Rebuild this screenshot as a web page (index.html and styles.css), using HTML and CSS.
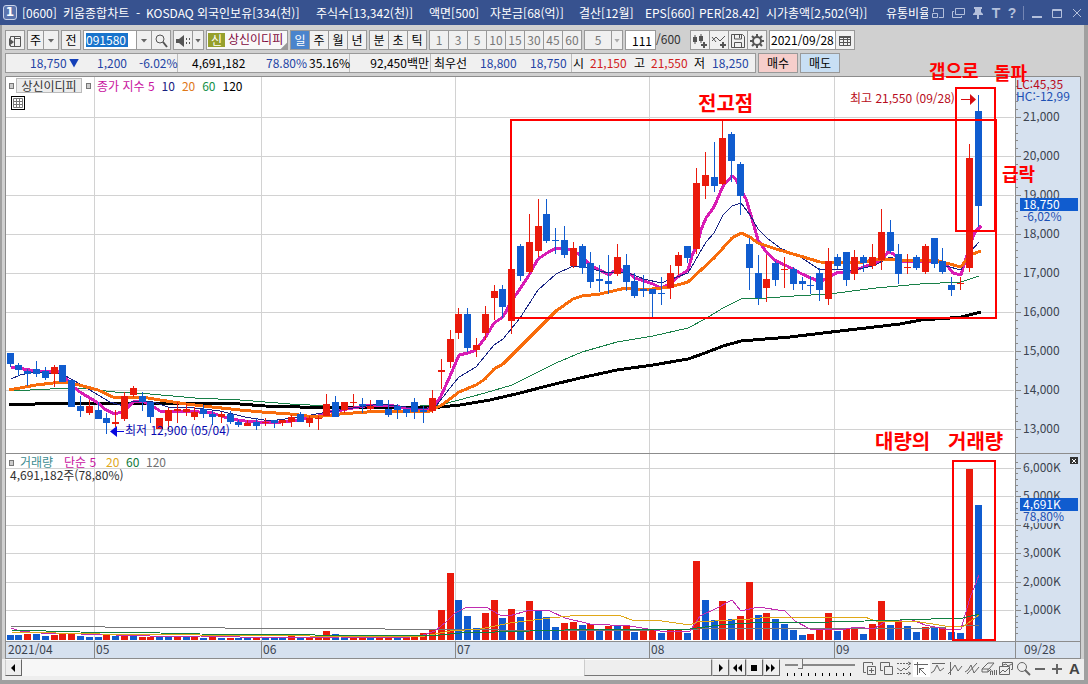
FILE: index.html
```html
<!DOCTYPE html>
<html lang="ko">
<head>
<meta charset="utf-8">
<title>키움종합차트</title>
<link rel="stylesheet" href="styles.css">
</head>
<body>
<header class="titlebar">
  <span class="win-no">1</span>
  <h1 class="title"><span>[0600]</span><span>키움종합차트</span><span>-</span><span>KOSDAQ</span><span>외국인보유[334(천)]</span><span>주식수[13,342(천)]</span><span>액면[500]</span><span>자본금[68(억)]</span><span>결산[12월]</span><span>EPS[660]</span><span>PER[28.42]</span><span>시가총액[2,502(억)]</span><span>유통비율</span></h1>
  <div class="win-tools">
    <button aria-label="창 크기"><svg viewBox="0 0 14 14"><path d="M2.500 6V2.500h10v9H8M1.500 7.500h5v4h-5z"/></svg></button>
    <button aria-label="창 복사"><svg viewBox="0 0 14 14"><path d="M4.500 2.500h9v6h-9zM3 5.500H1.500v6h9V10"/></svg></button>
    <button aria-label="고정"><svg viewBox="0 0 14 14"><path class="solid" d="M3 1h8v2h-1v3l2 2v1H8v4H6V9H2V8l2-2V3H3z"/></svg></button>
    <button class="glyph">T</button>
    <button class="glyph">?</button>
    <i class="sep"></i>
    <button aria-label="최소화"><svg viewBox="0 0 14 14"><path class="thick" d="M2 11h10"/></svg></button>
    <button aria-label="최대화"><svg viewBox="0 0 14 14"><path d="M2.500 3.500h9v8h-9zM2 4.500h10"/></svg></button>
    <button aria-label="닫기"><svg viewBox="0 0 14 14"><path d="M3 3l8 8M11 3l-8 8"/></svg></button>
  </div>
</header>
<main class="window">
  <div class="toolbar">
    <button class="btn" aria-label="패널"><svg viewBox="0 0 16 16"><path d="M3.500 6V3.500h10v10h-10V12M7.500 3v11M7 5.500h7"/><path class="solid" d="M2 5l5 4-5 4z"/></svg></button>
    <div class="group"><button class="btn w17">주</button><button class="btn w15 arrow" aria-label="종목 구분"></button></div>
    <button class="btn">전</button>
    <div class="group"><label class="code"><input type="text" value="091580" aria-label="종목코드"></label><button class="btn w15 arrow" aria-label="종목 목록"></button><button class="btn" aria-label="검색"><svg viewBox="0 0 16 16"><circle cx="7" cy="6" r="4"/><path class="thick" d="M10 9l4 5"/></svg></button></div>
    <div class="group"><button class="btn" aria-label="소리"><svg viewBox="0 0 16 16"><path class="solid" d="M1 6h3l5-4v12l-5-4H1z"/><path class="dots" d="M11.500 5v6M14.500 5v6"/></svg></button><button class="btn w11 arrow" aria-label="소리 설정"></button></div>
    <div class="stock"><b>신</b><span>상신이디피</span></div>
    <div class="group"><button class="btn on">일</button><button class="btn">주</button><button class="btn">월</button><button class="btn">년</button></div>
    <div class="group"><button class="btn">분</button><button class="btn">초</button><button class="btn">틱</button></div>
    <div class="group dim"><button class="btn">1</button><button class="btn">3</button><button class="btn">5</button><button class="btn">10</button><button class="btn">15</button><button class="btn">30</button><button class="btn">45</button><button class="btn">60</button></div>
    <div class="group dim"><button class="btn w28">5</button><button class="btn w11 arrow" aria-label="분 선택"></button></div>
    <label class="count"><input type="text" value="111" aria-label="봉 개수"><span>/600</span></label>
    <div class="group"><button class="btn" aria-label="봉 추가"><svg viewBox="0 0 16 16"><path class="solid" d="M1 4h4v5H1zM7 3h4v5H7z"/><path d="M3 2v9M9 1v9"/><path class="thick" d="M12 9v6M9 12h6"/></svg></button><button class="btn" aria-label="지표 추가"><svg viewBox="0 0 16 16"><path d="M1 8l4-4 4 4 5-5M1 4l4 5"/><path class="thick" d="M12 9v6M9 12h6"/></svg></button><button class="btn" aria-label="저장"><svg viewBox="0 0 16 16"><path d="M1.500 1.500h11l2 2v11h-13zM4.500 2v4h7V2M4.500 14V9.500h7V14M9.500 2v3"/></svg></button><button class="btn" aria-label="설정"><svg viewBox="0 0 16 16"><circle class="thick" cx="8" cy="8" r="4"/><path class="thick" d="M8 1v3M8 12v3M1 8h3M12 8h3M3 3l2 2M11 11l2 2M13 3l-2 2M3 13l2-2"/></svg></button></div>
    <div class="group"><label class="date"><input type="text" value="2021/09/28" aria-label="날짜"></label><button class="btn" aria-label="달력"><svg viewBox="0 0 16 16"><path d="M2.500 3.500h11v9h-11zM3 6.500h11M3 9.500h11M6.500 5v8M10.500 5v8"/><path class="thick" d="M2 4h12"/></svg></button></div>
  </div>
  <div class="quotes">
    <div class="quote-box">
      <div class="q q1 blue"><span>18,750</span><i class="down"></i><span>1,200</span><span>-6.02%</span></div>
      <div class="q q2"><span>4,691,182</span><span class="blue">78.80%</span><span>35.16%</span></div>
      <div class="q q3"><span>92,450백만</span></div>
      <div class="q q4"><span>최우선</span><span class="blue">18,800</span><span class="blue">18,750</span></div>
      <div class="q q5"><span>시</span><span class="red">21,150</span><span>고</span><span class="red">21,550</span><span>저</span><span class="blue">18,250</span></div>
    </div>
    <button class="trade buy">매수</button><button class="trade sell">매도</button>
  </div>
  <section class="chart">
    <svg id="chart" viewBox="5 76 1076 583" role="img" aria-label="상신이디피 일봉 차트">
      <rect class="plot" x="5" y="76" width="1076" height="583"/>
      <rect class="axis" x="1016" y="77" width="65" height="582"/>
      <rect class="axis" x="6" y="642" width="1075" height="17"/>
      <g id="grid"></g>
      <g id="averages"></g>
      <g id="candles"></g>
      <g id="volumes"></g>
      <g id="volume-averages"></g>
      <path class="frame" d="M5.500 659V76.500H1080.500V658.500M1015.500 77V658M6 453.500H1080M6 641.500H1080M5 658.500H1081"/>
      <g id="labels"></g>
      <rect class="tag" x="1020" y="198" width="58" height="13"/>
      <text class="on-tag" x="1023" y="209">18,750</text>
      <text class="t-blue" x="1023" y="221">-6,02%</text>
      <rect class="tag" x="1020" y="498" width="58" height="13"/>
      <rect class="axis" x="1022" y="511" width="50" height="12"/>
      <text class="on-tag" x="1023" y="509">4,691K</text>
      <text class="t-blue" x="1023" y="521">78,80%</text>
      <text class="t-red" x="1016" y="89">LC:45,35</text>
      <text class="t-blue" x="1016" y="101">HC:-12,99</text>
      <text class="t-red" x="850" y="103">최고 21,550 (09/28)</text>
      <path class="mark-red" d="M961 99h9v-5l6 5.500-6 5.500v-5h-9z"/>
      <text class="t-navy" x="125" y="435">최저 12,900 (05/04)</text>
      <path class="mark-navy" d="M124 431h-7v-5l-7 5.500 7 5.500v-5h7z"/>
      <g class="legend">
        <rect class="bullet" x="9.500" y="460.500" width="4" height="5"/>
        <text x="20" y="467" fill="#3c8c90">거래량</text><text x="64" y="467" fill="#c814a0">단순 5</text>
        <text x="106" y="467" fill="#e0a818">20</text><text x="126" y="467" fill="#107838">60</text><text x="146" y="467" fill="#707070">120</text>
        <text x="10" y="480" fill="#303030">4,691,182주(78,80%)</text>
      </g>
      <path class="box" d="M511 120H996V318H511zM956 88H995V231H956zM953 461H995V640H953z"/>
      <g class="note"><text x="698" y="111">전고점</text><text class="small" x="929" y="78">갭으로</text><text class="small" x="994" y="80">돌파</text><text class="small" x="1002" y="181">급락</text><text x="875" y="449">대량의</text><text x="948" y="449">거래량</text></g>
    </svg>
    <div class="overlay">
      <i class="dot"></i><button class="name">상신이디피</button><i class="dot"></i>
      <span class="ma"><span class="c5">종가 지수 5</span><span class="c10">10</span><span class="c20">20</span><span class="c60">60</span><span>120</span></span>
    </div>
    <button class="tablebtn" aria-label="데이터 표"><svg viewBox="0 0 12 12"><path d="M1.500 1.500h9v9h-9zM1 4.500h10M1 7.500h10M4.500 2v9M7.500 2v9"/></svg></button>
    <button class="closebtn" aria-label="지표 닫기"><svg viewBox="0 0 8 8"><path d="M2 2l4 4M6 2l-4 4"/></svg></button>
  </section>
  <footer class="bottom">
    <button class="nav" aria-label="왼쪽"><svg viewBox="0 0 14 14"><path d="M9 3v8L5 7z"/></svg></button>
    <div class="track"><div class="thumb"></div></div>
    <button class="nav" aria-label="오른쪽"><svg viewBox="0 0 14 14"><path d="M6 3v8l4-4z"/></svg></button>
    <button class="nav" aria-label="뒤로"><svg viewBox="0 0 14 14"><path d="M7 3v8L3 7zM12 3v8L8 7z"/></svg></button>
    <button class="nav" aria-label="정지"><svg viewBox="0 0 14 14"><path d="M4 4h6v6H4z"/></svg></button>
    <button class="nav" aria-label="앞으로"><svg viewBox="0 0 14 14"><path d="M2 3v8l4-4zM7 3v8l4-4z"/></svg></button>
    <div class="slider"><input type="range" min="0" max="100" value="20" aria-label="확대 비율"><div class="ticks"></div></div>
    <div class="tools">
      <button aria-label="창 추가"><svg viewBox="0 0 16 16"><path d="M4 11.500H1.500v-10h9V4M5.500 5.500h8v8h-8zM9.500 7v5M7 9.500h5"/></svg></button>
      <button aria-label="창 겹치기"><svg viewBox="0 0 16 16"><path d="M4 9.500H1.500v-8h9V5M5.500 5.500h8v8h-8z"/></svg></button>
      <button aria-label="구간"><svg viewBox="0 0 16 16"><path class="dash" d="M1 2.500h13M1 12.500h13"/><path d="M1 7l4 3 3-3 2 2 4-4M12 1l3 1.500-3 1.500M12 11l3 1.500-3 1.500"/></svg></button>
      <button class="active" aria-label="선택"><svg viewBox="0 0 16 16"><path d="M1 3.500h14M4.500 1v13M6 7l7 7M6 7.500h5M6.500 7v5"/></svg></button>
      <button aria-label="추세선"><svg viewBox="0 0 16 16"><path d="M2 2.500h13M1 12l3-2 3-6 3 6 4-3"/></svg></button>
      <button aria-label="수직선"><svg viewBox="0 0 16 16"><path d="M3.500 1v13M1 13l3-3 4-6 3 6 4-5"/></svg></button>
      <button aria-label="사선"><svg viewBox="0 0 16 16"><path d="M3 13L13 2M1 11l3-2 3-5 3 8 5-6"/></svg></button>
      <button aria-label="모두 지우기"><svg viewBox="0 0 16 16"><path d="M1 8l6-6h6l-5 6zM1 8v3h6V8M7 11l3-3M9.500 14v-4h2v4M13.500 9v5M15.500 9v5"/></svg></button>
      <button aria-label="차트 겹치기"><svg viewBox="0 0 16 16"><path d="M4.500 5V1.500h10v7H13M1.500 5.500h10v8h-10zM2 12l3-3 2 2 4-4M5 4l3-1 2 2 4-2"/></svg></button>
      <button aria-label="돋보기"><svg viewBox="0 0 16 16"><circle cx="7" cy="6" r="4.500"/><path class="thick" d="M10 9l5 5"/></svg></button>
      <button aria-label="축소"><svg viewBox="0 0 16 16"><path class="thick" d="M3 8h10"/></svg></button>
      <button aria-label="확대"><svg viewBox="0 0 16 16"><path class="thick" d="M3 8h10M8 3v10"/></svg></button>
      <button class="a">A</button>
    </div>
  </footer>
</main>
<script src="chart.js"></script>
</body>
</html>
```
FILE: styles.css
```css
* { box-sizing: border-box; }
body { margin: 0; background: #d0d0d0; font: 12px/16px "Noto Sans CJK KR", sans-serif; color: #000; }
button, input { font: inherit; color: inherit; margin: 0; padding: 0; border: 0; background: none; }
svg { display: block; fill: none; stroke: currentColor; }
.solid { fill: currentColor; stroke: none; }
.thick { stroke-width: 2; }

.titlebar { display: flex; align-items: center; height: 25px; padding: 0 4px 0 3px; background: #37528f; color: #fff; overflow: hidden; }
.win-no { flex: none; width: 14px; height: 15px; border: 1px solid #c8d2e8; border-radius: 3px; background: #5a74ae; font: bold 12px/13px "DejaVu Sans", sans-serif; text-align: center; }
.title { flex: 1; min-width: 0; margin: 0 0 0 5px; overflow: hidden; white-space: nowrap; font-size: 12px; line-height: 16px; font-weight: 400; display: grid; grid-template-columns: 41px 73px 10px 51px 119px 113px 61px 89px 66px 54px 67px 120px 1fr; }
.title span:last-child { overflow: hidden; }
.win-tools { flex: none; display: flex; align-items: center; gap: 6px; margin-left: 3px; color: #b4c0dc; }
.win-tools button, .win-tools svg { width: 14px; height: 14px; }
.win-tools .glyph { width: 10px; font: bold 14px/14px "Liberation Sans", sans-serif; }
.sep { width: 1px; height: 14px; background: #7486b4; }

.window { border: solid #a0a0a0; border-width: 0 4px 4px 2px; padding: 0 3px; background: #d0d0d0; }
.toolbar { display: flex; gap: 2px; padding-top: 5px; height: 25px; white-space: nowrap; }
.group { display: flex; }
.btn { flex: none; width: 20px; height: 20px; border: 1px solid #999; background: #f0f0f0; text-align: center; line-height: 16px; }
.btn svg { width: 16px; height: 16px; margin: 1px auto 0; color: #555; }
.group .btn + .btn, .code + .btn, .date + .btn { margin-left: -1px; }
.w17 { width: 17px; }
.w15 { width: 16px; }
.w11 { width: 12px; }
.w28 { width: 28px; }
.arrow::before { content: ""; display: block; margin: 1px auto 0; width: 7px; height: 4px; background: #666; clip-path: polygon(0 0, 100% 0, 50% 100%); }
.w11.arrow::before { width: 6px; }
.on { background: #4a84cc; color: #fff; }
.dim { color: #777; }
.dim .arrow::before { background: #aaa; }
.code, .date, .count input { height: 20px; border: 1px solid #999; background: #fff; }
.code { width: 54px; padding: 2px 0 0 2px; }
.code input { display: block; width: 42px; height: 14px; background: #1874cc; color: #fff; line-height: 14px; }
.stock { display: flex; width: 82px; height: 20px; border: 1px solid #999; background: linear-gradient(315deg, #999 0 4px, #f8f8f8 5px); line-height: 16px; color: #80083c; overflow: hidden; }
.stock b { width: 17px; margin: 2px 3px 2px 1px; background: #96a02c; color: #fff; font-weight: 400; text-align: center; line-height: 13px; }
.count { display: flex; line-height: 18px; width: 63px; color: #333; }
.count input { width: 31px; text-align: right; padding-right: 3px; color: #000; }
.date input { display: block; width: 65px; height: 17px; padding-left: 1px; }

.quotes { display: flex; gap: 2px; padding-top: 3px; height: 26px; }
.quote-box { display: flex; width: 751px; height: 20px; border: 1px solid #999; background: #f0f0f0; line-height: 16px; white-space: nowrap; }
.q { display: grid; align-items: center; border-right: 1px solid #bbb; }
.q:last-child { border: 0; flex: 1; }
.q1 { width: 172px; padding-left: 24px; grid-template-columns: 39px 28px 42px 1fr; }
.q2 { width: 172px; padding-left: 14px; grid-template-columns: 74px 43px 1fr; }
.q3 { width: 81px; justify-content: end; padding-right: 1px; }
.q4 { width: 141px; padding-left: 3px; grid-template-columns: 46px 50px 1fr; }
.q5 { padding-left: 1px; grid-template-columns: 17px 44px 17px 43px 18px 1fr; }
.down { width: 10px; height: 9px; background: #1440b8; clip-path: polygon(0 0, 100% 0, 50% 100%); }
.blue { color: #2444a4; }
.red { color: #d02020; }
.trade { width: 40px; height: 20px; border: 1px solid #999; line-height: 16px; }
.buy { background: #f6cecb; }
.sell { background: #c8dff4; }

.chart { position: relative; }
.chart > svg { width: 100%; height: auto; overflow: visible; stroke: none; }
.chart text { font-size: 12px; white-space: pre; }
.plot { fill: #fff; }
.axis { fill: #d6e1ef; }
.frame { stroke: #8c8c8c; }
.grid-line { stroke: #d2d2d2; }
.tick { stroke: #888; }
.label { fill: #3c4450; }
.up { fill: #ea1a0c; }
.dn { fill: #105ccf; }
.line { fill: none; stroke-linejoin: round; shape-rendering: crispEdges; }
.tag { fill: #105ccf; }
.on-tag { fill: #fff; }
.t-blue { fill: #1c50b4; }
.t-red { fill: #b80c20; }
.t-navy { fill: #0808b0; }
.mark-red { fill: #d80c10; }
.mark-navy { fill: #0808e0; }
.bullet { fill: #ccc; stroke: #777; }
.box { fill: none; stroke: #f00; stroke-width: 2; }
.chart .note text { fill: #f00; font-size: 20px; font-weight: 700; }
.chart .note .small { font-size: 18px; }
.overlay { position: absolute; top: 2px; left: 4px; display: flex; align-items: center; }
.dot { width: 5px; height: 6px; border: 1px solid #777; background: #ccc; }
.name { width: 66px; height: 15px; margin: 0 4px 0 2px; border: 1px solid #bbb; background: #ececec; line-height: 12px; color: #333; }
.ma { display: flex; gap: 7px; margin-left: 6px; line-height: 15px; }
.c5 { color: #c814a0; }
.c10 { color: #182080; }
.c20 { color: #e07818; }
.c60 { color: #149048; }
.tablebtn { position: absolute; top: 20px; left: 6px; width: 14px; height: 14px; border: 1px solid #000; background: #fff; color: #777; }
.tablebtn svg { width: 12px; height: 12px; }
.closebtn { position: absolute; top: 381px; right: 3px; width: 8px; height: 7px; background: #333; color: #fff; }

.bottom { display: flex; height: 21px; background: #eee; padding-bottom: 4px; margin: 0 -3px; padding-left: 3px; }
.nav { flex: none; width: 17px; height: 17px; border: 1px solid; border-color: #fff #666 #666 #ccc; background: #eee; }
.nav svg { width: 14px; height: 14px; fill: #000; stroke: none; }
.track { flex: 1; height: 17px; background: #f7f7f7; display: flex; justify-content: flex-end; }
.thumb { width: 128px; border: 1px solid; border-color: #fff #777 #777 #ccc; background: #eee; }
.slider { width: 70px; margin: 0 0 0 5px; }
.slider input { display: block; width: 70px; height: 10px; appearance: none; background: linear-gradient(#888, #888) 0 5px / 100% 2px no-repeat; }
.slider input::-webkit-slider-thumb { appearance: none; width: 5px; height: 10px; border: 1px solid #777; border-width: 0 1px 1px 0; background: #eee; }
.ticks { height: 3px; margin: 4px 1px 0 2px; background: repeating-linear-gradient(90deg, #000 0 1px, transparent 1px 7px); }
.tools { display: flex; margin: 1px 1px 0 7px; color: #666; }
.tools button { width: 17px; height: 17px; }
.tools svg { width: 16px; height: 16px; }
.tools .active { background: #fff; }
.tools .a { font: bold 15px/16px "Liberation Sans", sans-serif; color: #444; }
.dash { stroke-dasharray: 2 1; }
.dots { stroke-dasharray: 2 2; }
```
FILE: chart.js
```js
// Each candle: colour, body top, body bottom, high, low (chart units).
const candles = `b353-364-353-367 b365-370-363-376 b371-374-369-386 b369-374-361-377 b371-378-367-380 r367-374-365-387 b365-382-365-382 b380-407-380-407 b406-411-396-417 r406-413-400-415
b410-419-402-419 b418-423-413-434 r422-424-410-427 r396-419-392-421 r388-395-386-397 b396-402-392-411 b402-417-402-423 r418-429-418-429 r410-421-408-429 r409-411-402-423
r409-412-404-416 r412-417-407-420 b409-414-405-418 b414-417-411-425 r414-417-412-423 b414-422-411-424 b422-425-420-427 r423-426-420-426 b422-426-418-430 r422-423-418-426
b420-423-420-428 r420-423-420-426 r417-422-415-427 b414-422-412-422 r418-423-416-427 r418-419-416-430 r404-416-394-416 b402-417-396-417 r402-410-402-413 r402-403-394-407
b404-406-398-413 r406-409-400-410 b400-406-400-406 b409-415-400-417 b406-410-404-419 b409-413-409-417 b402-412-398-419 b410-412-406-423 r398-411-390-413 r370-372-359-389
r339-362-330-368 r314-333-308-339 b314-348-308-352 r345-350-338-357 r314-333-306-340 r291-298-285-320 b289-307-285-318 r269-321-269-334 b246-276-244-281 r242-272-214-274
r226-251-199-257 b214-241-199-243 b240-241-228-254 b240-255-226-258 r248-266-242-268 b246-268-244-274 b263-282-252-288 b279-281-265-292 b281-284-255-294 r257-274-244-276
b265-282-254-291 b281-296-273-298 b289-291-275-297 b289-294-289-318 b293-294-277-305 r273-288-265-299 r255-266-252-275 b246-258-246-263 r183-249-168-254 r175-186-152-199
b177-186-142-192 r138-184-121-185 b134-161-132-182 b164-196-162-215 b244-268-238-290 b273-298-255-305 r279-288-255-302 b263-280-261-286 r269-270-257-288 b269-284-267-290
b281-284-277-290 b285-286-276-294 b273-290-268-301 r261-299-248-305 b257-266-254-269 b252-280-252-286 r257-274-250-280 b257-263-255-272 r257-266-244-269 r232-260-209-270
b232-251-220-253 b254-274-244-284 r267-268-254-274 b257-268-255-270 r246-272-244-274 b238-264-238-268 b261-272-248-274 b285-290-277-296 r283-284-277-290 r158-268-144-272
b111-206-95-227`.split(/\s+/);

// Each volume bar: colour and top edge.
const volumes = `b635 b635 r634 b634 b636 r635 r634 r633 b636 b637 b637 r635 b636 r634 b636 r637 r637 b636 b636 r637
b637 r636 b638 r637 b638 r638 b638 b638 r638 b638 b638 b638 r636 b638 r638 r637 r631 b634 b637 r637 r637 b638 r637 r637
b638 r637 r637 r633 r630 r610 r573 b600 b616 b628 r613 r600 b618 r609 b617 r601 b611 b617 b627 r623 r622 b625 r624 b629
r626 b626 r626 b632 r630 r629 b633 r630 r629 b633 r561 b600 b620 r601 b619 r616 r582 b615 r613 b619 b624 b630 b635 r634
r630 r613 b631 r628 r627 b634 r624 r601 b625 r621 b626 b632 r627 b628 r628 b632 b633 r469 b505`.split(/\s+/);

const priceLines = [
  ['#188048', 1, '11,391 50,389 80,388 115,392 150,394 195,398 240,400 290,404 330,406 400,407 440,405 459,400 485,393 512,385 556,363 582,352 617,342 653,336 688,328 705,319 723,308 741,299 767,298 794,296 829,294 876,288 920,284 961,282 979,276'],
  ['#000', 3, '9,405 62,403 150,403 240,404 265,406 300,407 420,407 440,407 460,405 490,400 520,393 547,386 580,378 617,370 653,365 688,359 705,353 723,346 741,341 790,337 840,331 900,324 921,320 950,318 961,317 981,312'],
  ['#d81cb4', 3, '11,367 36,371 62,372 71,385 80,392 98,403 106,410 115,414 124,411 133,402 142,401 151,405 160,411 186,411 212,413 230,419 245,421 270,423 292,421 318,416 330,412 353,408 371,405 388,405 406,408 424,410 434,407 441,396 450,376 459,355 468,353 476,350 485,338 494,323 503,317 512,300 520,289 529,275 538,259 547,253 556,248 573,250 582,257 591,266 600,270 609,275 617,269 626,271 635,278 653,284 661,288 670,284 679,276 688,270 692,256 697,245 701,230 706,218 714,207 723,186 732,176 736,179 741,190 746,199 750,212 758,240 767,253 776,261 785,265 802,274 820,282 829,277 838,272 846,273 864,267 882,260 888,252 894,254 899,261 926,262 935,260 946,264 953,273 961,275 970,245 975,232 981,226'],
  ['#182484', 1, '11,379 20,375 36,372 62,374 80,384 98,395 110,402 124,406 133,401 150,401 168,407 195,408 220,411 245,417 270,421 300,417 327,412 353,408 380,404 424,409 436,406 450,388 459,377 476,367 494,345 503,339 520,318 538,290 556,274 573,266 582,266 600,271 609,273 626,272 644,279 661,283 688,273 706,242 714,233 723,215 732,206 741,203 750,215 758,229 767,238 780,248 802,258 820,270 840,269 850,271 873,266 890,257 900,261 935,261 946,266 961,270 970,252 979,242'],
  ['#f86c0c', 3, '9,390 36,385 62,382 75,384 98,390 115,398 142,397 160,400 186,404 212,407 240,410 262,412 290,414 315,417 340,414 380,411 430,411 442,405 459,392 476,385 485,379 494,369 503,364 529,338 547,320 556,311 573,299 582,296 600,294 626,288 644,290 670,287 688,282 714,258 732,238 741,233 750,237 758,243 776,249 800,256 820,262 860,263 873,260 893,259 905,261 935,260 946,263 961,267 970,255 981,251'],
];
const volumeLines = [
  ['#777', 1, '11,626 100,626 105,627 225,628 385,629 500,630 650,630 700,629 930,628 979,625'],
  ['#c02cb0', 1, '11,628 20,631 40,633 80,634 150,636 200,636 280,638 340,637 400,638 420,636 435,631 446,622 455,613 467,607 486,607 500,615 509,616 530,610 550,611 565,618 590,624 630,626 660,631 690,631 700,616 715,609 732,600 741,611 758,607 785,611 795,621 810,629 840,630 857,627 873,629 885,622 910,619 925,625 945,629 961,629 970,598 979,575'],
  ['#e0a818', 1, '11,632 100,634 200,635 420,637 450,631 480,629 510,623 550,618 580,615 618,615 632,620 655,620 690,625 697,622 750,619 770,617 865,617 875,621 920,622 945,626 963,627 979,615'],
  ['#108040', 1, '11,630 80,632 160,633 200,634 430,636 460,633 530,631 600,629 690,629 720,625 750,623 830,622 900,620 963,618 979,614'],
];

const fill = (id, html) => { document.getElementById(id).innerHTML = html; };
const xAt = i => Math.round(10.5 + 8.8 * i);
const kind = c => (c[0] === 'r' ? 'up' : 'dn');
const line = ([color, width, points]) => `<polyline class="line" stroke="${color}" stroke-width="${width}" points="${points}"/>`;

fill('candles', candles.map((c, i) => {
  const [top, bottom, high, low] = c.slice(1).split('-').map(Number);
  const x = xAt(i);
  return `<path class="${kind(c)}" d="M${x - 4} ${top}h7V${bottom}h-7zM${x - 1} ${high}h1V${low}h-1z"/>`;
}).join(''));
fill('volumes', volumes.map((v, i) => `<path class="${kind(v)}" d="M${xAt(i) - 4} ${v.slice(1)}h7V640h-7z"/>`).join(''));
fill('averages', priceLines.map(line).join(''));
fill('volume-averages', volumeLines.map(line).join(''));

const months = [['2021/04', 6], ['05', 94], ['06', 261], ['07', 455], ['08', 649], ['09', 834], ['09/28', 1022]];
const prices = [21, 20, 19, 18, 17, 16, 15, 14, 13];
const volumeRows = [468, 496, 525, 553, 582, 610];
let grid = '', labels = '';
const rule = (cls, d) => `<path class="${cls}" d="${d}"/>`;
prices.forEach((p, i) => {
  const y = 117 + 39 * i;
  grid += rule('grid-line', `M6 ${y}.5H1014`);
  labels += rule('tick', `M1016 ${y}.5h5`) + `<text class="label" x="1023" y="${y + 4}">${p},000</text>`;
});
volumeRows.forEach((y, i) => {
  grid += rule('grid-line', `M6 ${y}.5H1014`);
  labels += rule('tick', `M1016 ${y}.5h5`) + `<text class="label" x="1023" y="${y + 4}">${6 - i},000K</text>`;
});
for (let n = 0; n < 46; n++) labels += rule('tick', `M1016 ${Math.round(85.8 + 7.8 * n)}.5h2`);
for (let n = 0; n < 31; n++) labels += rule('tick', `M1016 ${Math.round(462 + 5.7 * n)}.5h2`);
months.forEach(([name, x], i) => {
  if (i > 0 && i < 6) {
    grid += rule('grid-line', `M${x}.5 77V641`);
    labels += rule('tick', `M${x}.5 642V658`);
  }
  labels += `<text class="label" x="${x + 2}" y="654">${name}</text>`;
});
fill('grid', grid);
fill('labels', labels);
```
